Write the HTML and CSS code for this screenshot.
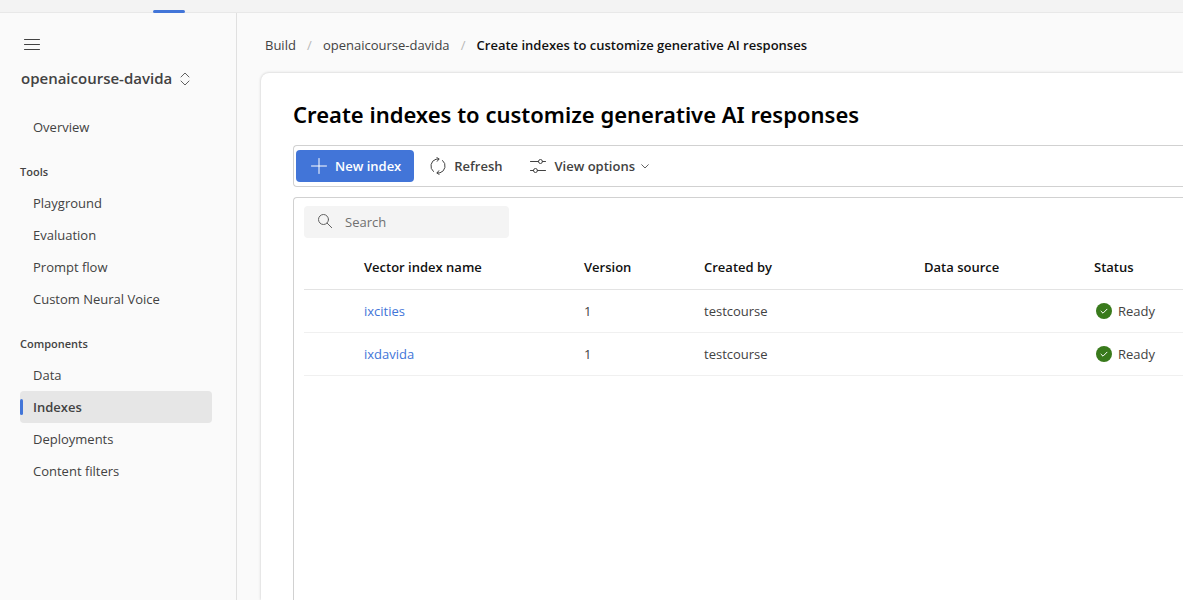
FILE: index.html
```html
<!DOCTYPE html>
<html lang="en">
<head>
<meta charset="utf-8">
<meta name="viewport" content="width=device-width, initial-scale=1">
<title>Create indexes to customize generative AI responses</title>
<link rel="stylesheet" href="styles.css">
</head>
<body>
<header class="topbar"><span class="topbar-active"></span></header>
<div class="shell">
  <aside class="sidebar">
    <button class="menu-button" type="button" aria-label="Toggle navigation">
      <svg width="16" height="12" viewBox="0 0 16 12" fill="none" stroke="currentColor" stroke-linecap="round"><path d="M.5 .5h15M.5 5.5h15M.5 10.5h15"/></svg>
    </button>
    <button class="project" type="button">openaicourse-davida
      <svg width="10" height="14" viewBox="0 0 10 14" fill="none" stroke="#616161" stroke-linecap="round" stroke-linejoin="round"><path d="M1 5l4-4 4 4M1 9l4 4 4-4"/></svg>
    </button>
    <nav class="nav">
      <a class="nav-item" href="#">Overview</a>
      <h2 class="nav-heading">Tools</h2>
      <a class="nav-item" href="#">Playground</a>
      <a class="nav-item" href="#">Evaluation</a>
      <a class="nav-item" href="#">Prompt flow</a>
      <a class="nav-item" href="#">Custom Neural Voice</a>
      <h2 class="nav-heading">Components</h2>
      <a class="nav-item" href="#">Data</a>
      <a class="nav-item selected" href="#" aria-current="page">Indexes</a>
      <a class="nav-item" href="#">Deployments</a>
      <a class="nav-item" href="#">Content filters</a>
    </nav>
  </aside>
  <main class="main">
    <nav class="breadcrumb" aria-label="Breadcrumb">
      <a href="#">Build</a><span class="slash">/</span><a href="#">openaicourse-davida</a><span class="slash">/</span><span class="current">Create indexes to customize generative AI responses</span>
    </nav>
    <section class="card">
      <h1 class="title">Create indexes to customize generative AI responses</h1>
      <div class="toolbar">
        <button class="tool primary" type="button">
          <svg width="16" height="16" viewBox="0 0 16 16" fill="none" stroke="currentColor" stroke-linecap="round"><path d="M8 .5v15M.5 8h15"/></svg>
          New index
        </button>
        <button class="tool" type="button">
          <svg width="16" height="18" viewBox="0 0 16 18" fill="none" stroke="currentColor" stroke-linecap="round" stroke-linejoin="round"><path d="M3.4 14.5A7.2 7.2 0 0 1 6 2.2L9 2M6.8 .5L9 2 7.2 4.3M12.6 3.5A7.2 7.2 0 0 1 10 15.8L7 16M9.2 17.5L7 16 8.8 13.7"/></svg>
          Refresh
        </button>
        <button class="tool" type="button">
          <svg width="16" height="16" viewBox="0 0 16 16" fill="none" stroke="currentColor" stroke-linecap="round"><path d="M.5 3.5h8M12.5 3.5h3M.5 12.5h3M7.5 12.5h8"/><circle cx="10.5" cy="3.5" r="2"/><circle cx="5.5" cy="12.5" r="2"/></svg>
          View options
          <svg class="chevron" width="8" height="6" viewBox="0 0 8 6" fill="none" stroke="currentColor" stroke-linecap="round" stroke-linejoin="round"><path d="M.7 1.7L4 5 7.3 1.7"/></svg>
        </button>
      </div>
      <div class="panel">
        <label class="search">
          <svg width="16" height="16" viewBox="0 0 16 16" fill="none" stroke="#616161" stroke-linecap="round"><circle cx="6.5" cy="5.5" r="5"/><path d="M10.2 9.2l4.5 4.5"/></svg>
          <input type="search" placeholder="Search" aria-label="Search">
        </label>
        <table class="table">
          <colgroup><col class="c-select"><col class="c-name"><col class="c-version"><col class="c-creator"><col class="c-source"><col></colgroup>
          <thead>
            <tr><td></td><th>Vector index name</th><th>Version</th><th>Created by</th><th>Data source</th><th>Status</th></tr>
          </thead>
          <tbody>
            <tr><td></td><td><a href="#">ixcities</a></td><td>1</td><td>testcourse</td><td></td><td><span class="status"><svg width="16" height="16" viewBox="0 0 16 16" fill="none"><circle cx="8" cy="8" r="8" fill="#397a1c"/><path d="M5 8.2l2 2L11 6.2" stroke="#fff" stroke-linecap="round" stroke-linejoin="round"/></svg>Ready</span></td></tr>
            <tr><td></td><td><a href="#">ixdavida</a></td><td>1</td><td>testcourse</td><td></td><td><span class="status"><svg width="16" height="16" viewBox="0 0 16 16" fill="none"><circle cx="8" cy="8" r="8" fill="#397a1c"/><path d="M5 8.2l2 2L11 6.2" stroke="#fff" stroke-linecap="round" stroke-linejoin="round"/></svg>Ready</span></td></tr>
          </tbody>
        </table>
      </div>
    </section>
  </main>
</div>
</body>
</html>
```
FILE: styles.css
```css
* { box-sizing: border-box; }

body {
  margin: 0;
  min-height: 100vh;
  display: flex;
  flex-direction: column;
  background: #fafafa;
  color: #424242;
  font: 13px/20px "Segoe UI", "Open Sans", "Noto Sans", sans-serif;
}

a { color: inherit; text-decoration: none; }
button { border: 0; background: none; color: inherit; font: inherit; padding: 0; cursor: pointer; }
svg { flex: none; }

.topbar {
  display: flex;
  align-items: flex-end;
  height: 13px;
  padding-left: 153px;
  background: #f3f3f3;
  border-bottom: 1px solid #e8e8e8;
}
.topbar-active {
  width: 32px;
  height: 3px;
  margin-bottom: -1px;
  border-radius: 2px;
  background: #4275d8;
}

.shell { flex: 1; display: flex; }

.sidebar {
  flex: none;
  width: 237px;
  padding: 16px 24px 16px 20px;
  border-right: 1px solid #e0e0e0;
}
.menu-button { display: flex; align-items: center; justify-content: center; width: 24px; height: 32px; }
.project {
  display: flex;
  align-items: center;
  gap: 8px;
  height: 34px;
  padding-left: 1px;
  font-size: 15px;
  font-weight: 600;
}
.project svg { margin-top: 2px; }
.nav { padding-top: 16px; }
.nav-item {
  display: flex;
  align-items: center;
  height: 32px;
  padding-left: 13px;
  border-radius: 4px;
}
.nav-item.selected { padding-left: 0; background: #e6e6e6; font-weight: 600; }
.nav-item.selected::before {
  content: "";
  width: 3px;
  height: 16px;
  margin-right: 10px;
  border-radius: 2px;
  background: #4275d8;
}
.nav-heading { margin: 0; padding: 21px 0 7px; font-size: 11px; line-height: 16px; font-weight: 600; }

.main { flex: 1; min-width: 0; display: flex; flex-direction: column; padding-left: 24px; }
.breadcrumb { display: flex; align-items: center; height: 60px; padding: 4px 0 0 4px; white-space: nowrap; }
.slash { width: 27px; text-align: center; color: #b8b8b8; }
.current { color: #111; font-weight: 600; }

.card {
  flex: 1;
  display: flex;
  flex-direction: column;
  padding: 24px 0 0 32px;
  background: #fff;
  border-radius: 8px 0 0;
  box-shadow: 0 0 3px rgba(0, 0, 0, .22);
}
.title { margin: 0; font-family: "Segoe UI", "Noto Sans", sans-serif; font-size: 22px; line-height: 35px; font-weight: 600; color: #000; }

.toolbar {
  display: flex;
  align-items: center;
  gap: 4px;
  margin-top: 13px;
  padding: 4px 2px;
  border: 1px solid #d1d1d1;
  border-right: 0;
  border-radius: 4px 0 0 4px;
}
.tool {
  display: flex;
  align-items: center;
  gap: 8px;
  height: 32px;
  padding: 0 12px;
  border-radius: 4px;
  font-weight: 600;
  white-space: nowrap;
}
.tool.primary { padding: 0 13px 0 15px; background: #4275d8; color: #fff; }
.chevron { margin-left: -2px; color: #616161; }

.panel {
  flex: 1;
  margin-top: 10px;
  padding: 8px 0 0 10px;
  border: 1px solid #d1d1d1;
  border-width: 1px 0 0 1px;
  border-radius: 4px 0 0;
}
.search {
  display: flex;
  align-items: center;
  gap: 12px;
  width: 205px;
  height: 32px;
  padding: 0 13px;
  border-radius: 4px;
  background: #f4f4f4;
}
.search input { flex: 1; min-width: 0; padding: 0; border: 0; outline: 0; background: none; font: inherit; color: inherit; }
.search input::placeholder { color: #707070; }

.table { width: 100%; margin-top: 7px; border-collapse: collapse; table-layout: fixed; }
.c-select { width: 60px; }
.c-name, .c-creator { width: 220px; }
.c-version { width: 120px; }
.c-source { width: 170px; }
.table th, .table td { height: 43px; padding: 0; text-align: left; border-bottom: 1px solid #f0f0f0; }
.table thead th, .table thead td { height: 44px; border-bottom-color: #e3e3e3; }
.table th { font-weight: 600; color: #111; }
.table a { color: #4275d8; }
.status { display: flex; align-items: center; gap: 6px; padding-left: 2px; }
```
